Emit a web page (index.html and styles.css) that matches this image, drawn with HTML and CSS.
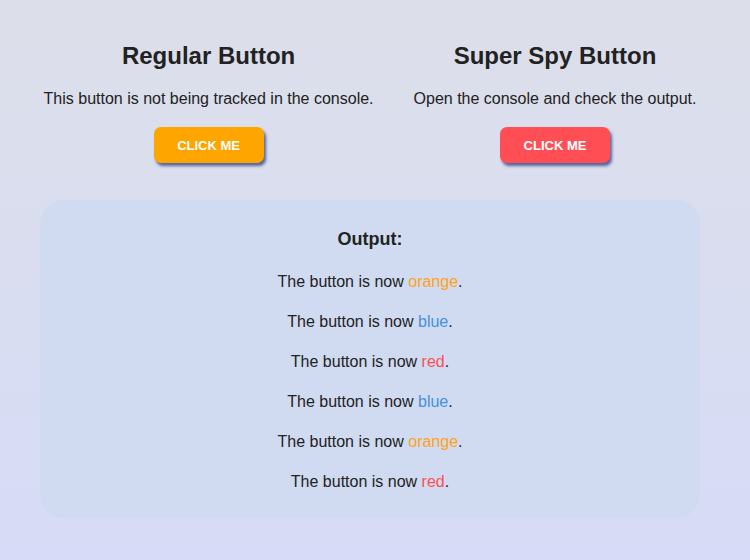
FILE: index.html
```html
<!DOCTYPE html>
<html lang="en">
<head>
	<meta charset="utf-8" />
	<title>Spy button</title>
	<link rel="stylesheet" href="styles.css">
</head>
<body>
	<div class="wrapper">
		<div class="demos">
			<div class="demo">
				<h2>Regular Button</h2>
				<p>This button is not being tracked in the console.</p>
				<button class="btn orange">CLICK ME</button>
			</div>
			<div class="demo">
				<h2>Super Spy Button</h2>
				<p>Open the console and check the output.</p>
				<button class="btn red">CLICK ME</button>
			</div>
		</div>

		<div class="output">
			<h3>Output:</h3>
			<p>The button is now <span class="c-orange">orange</span>.</p>
			<p>The button is now <span class="c-blue">blue</span>.</p>
			<p>The button is now <span class="c-red">red</span>.</p>
			<p>The button is now <span class="c-blue">blue</span>.</p>
			<p>The button is now <span class="c-orange">orange</span>.</p>
			<p>The button is now <span class="c-red">red</span>.</p>
		</div>
	</div>
</body>
</html>
```

FILE: styles.css
```css
html{min-height:100%;background:linear-gradient(#dcdfe9,#d7dbf7);}
body{font-family:"Liberation Sans",Arial,sans-serif;margin:0;padding:0;color:#222;font-size:16px;line-height:1.15;}
.wrapper{width:660px;margin:0 40px;padding-top:40px;}
.demos{display:flex;justify-content:center;gap:40px;}
.demo{text-align:center;}
.demo h2{font-size:24px;margin:2px 0 20px;line-height:28px;}
.demo p{margin:0 0 19px;}
.btn{width:110px;height:36px;border:0;border-radius:7px;color:#fff;font-family:inherit;font-weight:bold;font-size:13px;box-shadow:2px 3px 3px rgba(40,60,130,.75);cursor:pointer;}
.btn.orange{background:#ffa500;}
.btn.red{background:#ff4f55;}
.output{margin-top:37px;background:#d0daf0;border-radius:24px;padding:28px 20px 27px;text-align:center;}
.output h3{font-size:18px;margin:0 0 23px;line-height:22px;}
.output p{margin:0 0 22px;line-height:18px;}
.output p:last-child{margin-bottom:0;}
.c-orange{color:#ffa31a;}
.c-blue{color:#4a90d9;}
.c-red{color:#ff4f55;}
```
